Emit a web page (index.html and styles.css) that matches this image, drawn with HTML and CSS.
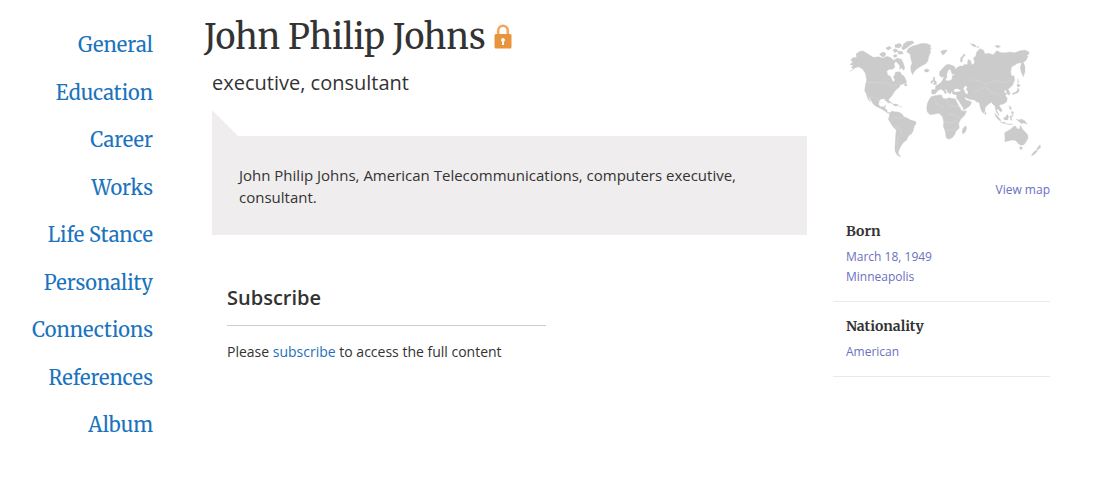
FILE: index.html
```html
<!DOCTYPE html>
<html lang="en">
<head>
  <meta charset="UTF-8">
  <meta name="viewport" content="width=device-width, initial-scale=1">
  <title>John Philip Johns</title>
  <link rel="stylesheet" href="styles.css">
</head>
<body>
  <div class="page">

    <nav class="side-nav">
      <ul>
        <li><a href="#general">General</a></li>
        <li><a href="#education">Education</a></li>
        <li><a href="#career">Career</a></li>
        <li><a href="#works">Works</a></li>
        <li><a href="#life-stance">Life Stance</a></li>
        <li><a href="#personality">Personality</a></li>
        <li><a href="#connections">Connections</a></li>
        <li><a href="#references">References</a></li>
        <li><a href="#album">Album</a></li>
      </ul>
    </nav>

    <main class="profile">
      <h1>John Philip Johns
        <svg class="lock" viewBox="0 0 18 25" aria-hidden="true">
          <path d="M4.200 11V6.500a4.800 4.800 0 0 1 9.600 0V11" fill="none" stroke="#f3a75c" stroke-width="2.600"/>
          <rect x="0.500" y="10" width="17" height="14.500" rx="1.500" fill="#e9933c"/>
          <path d="M9 14a2 2 0 0 1 1 3.700V21H8v-3.300A2 2 0 0 1 9 14z" fill="#fff"/>
        </svg>
      </h1>
      <p class="role">executive, consultant</p>
      <div class="bio">
        <p>John Philip Johns, American Telecommunications, computers executive, consultant.</p>
      </div>
      <section class="subscribe">
        <h2>Subscribe</h2>
        <p>Please <a href="#subscribe">subscribe</a> to access the full content</p>
      </section>
    </main>

    <aside class="facts">
      <svg class="map" viewBox="0 0 630 405" role="img" aria-label="World map">
        <g class="land">
          <!-- North and Central America -->
          <path d="M28 126L40 116 34 112 40 106 30 104 38 96 32 90 38 83 50 82 48 72 60 64 70 63 84 72 100 82 116 80 128 84 142 88 152 84 160 90 168 94 162 102 165 110 158 118 148 118 140 124 143 134 152 140 156 150 160 156 165 150 160 142 164 135 167 126 180 125 186 135 192 138 198 150 200 158 192 161 180 165 178 172 170 178 163 185 158 194 152 202 146 208 145 221 140 210 130 206 122 208 117 212 116 224 122 230 132 230 138 224 134 236 140 238 142 246 150 248 144 250 130 240 118 234 106 228 98 220 90 205 84 198 92 216 84 208 79 192 74 182 76 165 80 150 76 130 68 118 56 110 45 114z"/>
          <!-- Canadian Arctic -->
          <path d="M118 73L128 66 138 70 134 80 126 80zM130 84L142 79 154 84 158 90 148 95 134 92zM137 54L148 49 155 54 144 61zM158 60L168 56 174 62 164 68zM160 76L169 73 172 79 162 83zM162 90L172 84 184 88 190 100 194 112 192 121 184 114 178 118 180 108 172 98zM165 44L180 40 186 48 176 54 165 52zM190 42L202 34 218 33 222 39 210 46 200 54 190 60 184 54 190 48zM172 64L186 64 190 71 176 73zM152 105L160 108 158 115 151 113zM193 162L200 161 201 168 194 167z"/>
          <!-- Greenland and Iceland -->
          <path d="M200 66L204 56 216 49 232 44 246 40 262 41 272 46 270 56 272 66 266 80 264 92 256 102 244 108 230 117 222 126 218 134 213 124 212 110 216 98 212 84 210 72zM253 119L261 117 268 120 264 126 255 126z"/>
          <!-- Caribbean -->
          <path d="M134 211L143 209 152 216 158 221 149 218zM158 222L170 222 177 227 164 228zM179 229L184 230 181 232z"/>
          <!-- South America -->
          <path d="M148 250L156 243 164 245 176 246 186 252 192 260 202 264 212 270 226 274 229 280 222 290 219 304 214 312 205 318 200 330 190 338 184 346 180 354 176 362 175 372 182 378 180 380 171 375 165 362 165 348 166 334 167 314 169 300 160 292 151 278 145 268 148 258z"/>
        </g>
        <g class="land" transform="translate(270 0)">
          <!-- Europe and Asia -->
          <path d="M5 192L5 179 17 178 16 169 26 163 34 156 38 150 40 143 46 142 48 152 58 152 67 147 66 138 76 134 66 132 63 124 60 116 54 122 50 132 51 142 46 148 42 140 34 142 28 135 29 125 38 115 48 105 56 103 66 106 74 110 76 118 82 112 90 108 98 108 104 103 112 104 114 88 122 92 126 105 134 98 130 85 137 78 140 66 150 56 160 60 165 72 176 70 190 74 200 62 215 68 228 68 240 66 255 68 270 62 285 60 297 66 297 73 290 74 294 80 287 92 280 97 285 110 285 125 280 140 273 125 271 110 275 98 262 100 255 105 245 110 242 125 244 137 252 137 254 150 248 165 240 173 234 178 240 188 238 196 232 192 228 181 222 181 224 188 230 190 226 197 232 205 230 215 222 221 212 224 207 226 212 234 217 240 213 246 206 240 203 236 200 240 205 250 208 258 202 252 197 240 195 228 188 222 184 217 176 222 166 232 164 245 160 250 154 242 150 228 147 217 140 216 133 210 118 208 108 203 103 202 108 210 117 212 125 217 120 227 108 236 98 243 94 236 88 222 80 207 80 195 68 192 66 184 60 192 54 188 50 180 44 178 50 188 46 192 40 182 34 178 26 180 20 186 16 192z"/>
          <!-- British Isles, Svalbard, Novaya Zemlya -->
          <path d="M10 141L15 143 14 150 19 156 20 163 9 164 13 158 9 153zM3 153L8 151 8 158 3 161zM32 64L42 60 50 63 44 71 38 76zM46 60L52 60 48 64zM91 95L92 84 103 71 106 75 98 84 96 96zM121 41L134 43 139 51 129 49zM140 50L146 49 144 54zM194 48L203 46 212 49 204 54zM0 55L4 54 3 58z"/>
          <!-- Africa and Madagascar -->
          <path d="M3 200L14 197 34 194 38 204 48 207 56 203 76 207 82 220 90 235 96 244 110 243 104 256 92 268 86 280 88 294 78 304 74 314 66 324 54 328 48 322 46 305 40 290 41 275 38 262 32 254 26 250 12 253 0 254 -8 246 -10 235 -8 220 -2 208zM107 287L110 294 106 306 99 312 96 306 99 295z"/>
          <!-- Japan, Sri Lanka, south-east Asia, New Guinea -->
          <path d="M261 164L266 162 271 166 266 171 261 169zM264 173L268 180 264 188 255 191 249 194 247 190 257 186 262 181zM264 146L266 158 263 158zM165 245L169 249 167 254 164 251zM194 250L202 258 211 268 213 274 206 270 197 260zM211 276L224 277 230 281 220 280zM220 264L226 262 232 253 236 260 233 270 224 270zM240 258L250 256 244 262 246 271 242 270zM237 227L243 232 244 240 239 236zM245 244L251 247 249 254 244 249zM230 282L248 282 240 284zM258 267L267 270 274 267 284 272 292 282 281 279 275 281 266 274z"/>
          <!-- Australia and New Zealand -->
          <path d="M224 308L234 302 244 296 249 290 257 288 260 295 268 298 272 286 277 297 285 305 293 314 294 325 288 336 282 344 272 346 264 340 258 332 248 330 238 332 224 335 225 324zM269 351L277 351 276 358 270 358zM330 344L332 352 324 360 320 361 322 354zM318 360L322 364 312 374 304 377 308 370z"/>
        </g>
        <!-- Inland seas -->
        <path class="sea" d="M341 181L347 176 356 178 363 182 355 185 343 185zM370 176L375 168 382 170 378 178 384 186 382 193 376 190 374 182zM349 206L354 209 361 221 369 233 371 242 366 240 360 228z"/>
        <!-- Borders -->
        <path class="border" d="M78 157L136 158 154 166 170 164 178 158M91 199L106 203 122 218M154 270L166 263 178 266 190 262M163 290L176 294 186 304 182 316M173 320L172 360M386 157L398 149 420 154 436 162 470 152 500 158 512 150M400 190L416 180 438 170 450 186 476 194M282 207L294 225 313 230M315 205L327 228 358 230M324 252L346 255 360 262M312 275L334 280 352 272M319 300L339 301 351 290"/>
      </svg>
      <a class="view-map" href="#map">View map</a>

      <section class="fact">
        <h3>Born</h3>
        <a href="#born-date">March 18, 1949</a>
        <a href="#born-place">Minneapolis</a>
      </section>
      <section class="fact">
        <h3>Nationality</h3>
        <a href="#nationality">American</a>
      </section>
    </aside>

  </div>
</body>
</html>
```
FILE: styles.css
```css
* {
  box-sizing: border-box;
}
body {
  margin: 0;
  background: #fff;
  color: #333;
  font-family: "Open Sans", sans-serif;
  font-size: 14px;
}
h1, h2, h3, p, ul {
  margin: 0;
}
h1, h3, .side-nav {
  font-family: Merriweather, "DejaVu Serif", serif;
}
a {
  color: #1f6fb8;
  text-decoration: none;
}
a:hover {
  text-decoration: underline;
}

.page {
  display: flex;
  align-items: flex-start;
  padding-right: 60px;
}

/* left menu */
.side-nav {
  flex: 0 0 153px;
  padding-top: 31px;
}
.side-nav ul {
  display: flex;
  flex-direction: column;
  justify-content: space-between;
  min-height: 408px;
  padding: 0;
  list-style: none;
  text-align: right;
}
.side-nav a {
  display: block;
  color: #1a73be;
  font-size: 20px;
  line-height: 28px;
  white-space: nowrap;
}

/* profile */
.profile {
  flex: 1;
  min-width: 0;
  padding: 14px 26px 0 51px;
}
h1 {
  font-size: 34px;
  font-weight: normal;
  line-height: 46px;
}
.lock {
  width: 18px;
  height: 25px;
}
.role {
  margin-left: 8px;
  padding-top: 8px;
  font-size: 20px;
  line-height: 30px;
}
.bio {
  position: relative;
  margin: 38px 0 0 8px;
  padding: 28px 27px 27px;
  background: #efeded;
  font-size: 15px;
  line-height: 22px;
}
.bio::before {
  content: "";
  position: absolute;
  left: 0;
  bottom: 100%;
  border-top: 26px solid transparent;
  border-left: 26px solid #efeded;
}
.subscribe {
  max-width: 342px;
  padding: 48px 0 0 23px;
}
.subscribe h2 {
  padding-bottom: 12px;
  border-bottom: 1px solid #ccc;
  font-size: 20px;
  font-weight: 600;
  line-height: 30px;
}
.subscribe p {
  padding-top: 16px;
  line-height: 20px;
}

/* right column */
.facts {
  flex: 0 0 217px;
  padding-top: 30px;
}
.facts a {
  display: block;
  color: #6b70c0;
  font-size: 12px;
  line-height: 20px;
}
.map {
  display: block;
  width: 210px;
  margin-left: 7px;
}
.land {
  fill: #cbcbcb;
  stroke: #cbcbcb;
  stroke-width: 1;
  stroke-linejoin: round;
}
.sea {
  fill: #fff;
}
.border {
  fill: none;
  stroke: #d6d6d6;
  stroke-width: 2;
}
.facts .view-map {
  margin: 15px 0 19px;
  text-align: right;
}
.fact {
  margin-bottom: 12px;
  padding: 0 13px 14px;
  border-bottom: 1px solid #e9e9e9;
}
.fact h3 {
  padding-bottom: 4px;
  font-size: 14px;
  line-height: 24px;
}
```
